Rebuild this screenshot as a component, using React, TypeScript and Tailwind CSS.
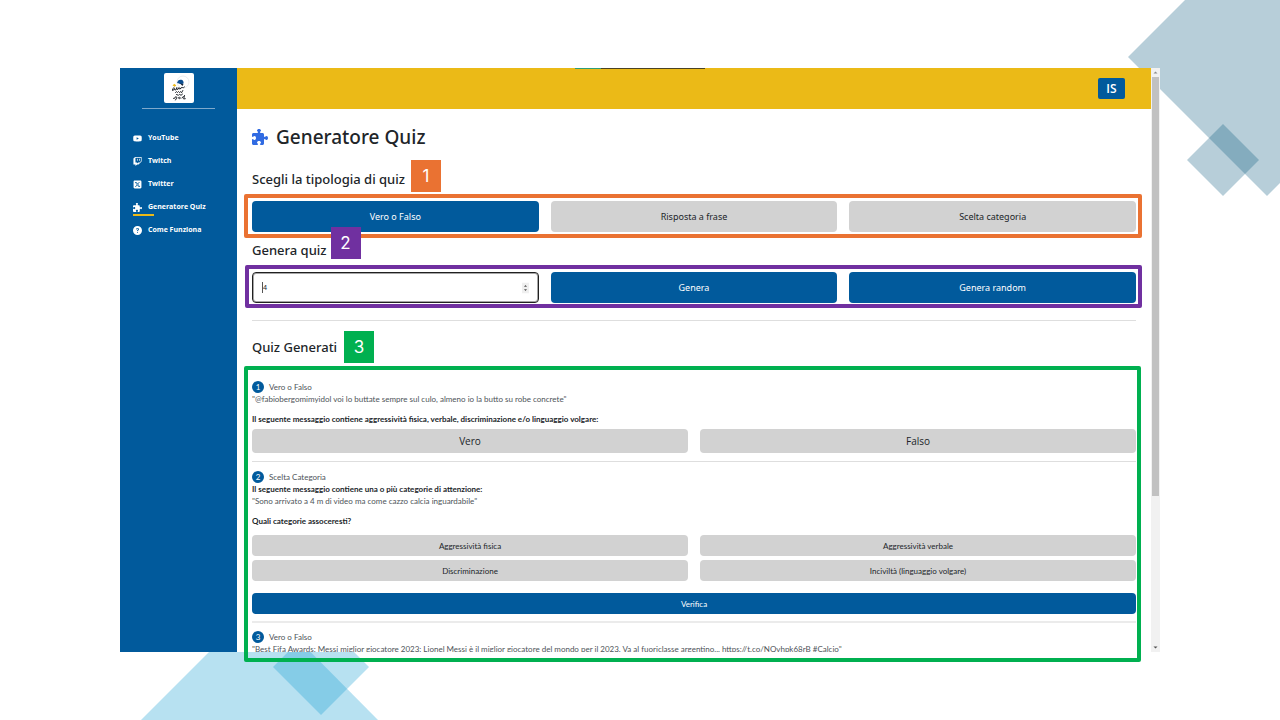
import type { ReactNode } from "react";
import { FaCircleQuestion, FaPuzzlePiece, FaSquareXTwitter, FaTwitch, FaYoutube } from "react-icons/fa6";

const navItems = [
  { label: "YouTube", Icon: FaYoutube, active: false },
  { label: "Twitch", Icon: FaTwitch, active: false },
  { label: "Twitter", Icon: FaSquareXTwitter, active: false },
  { label: "Generatore Quiz", Icon: FaPuzzlePiece, active: true },
  { label: "Come Funziona", Icon: FaCircleQuestion, active: false },
];

function Backdrop() {
  return (
    <>
      <svg className="absolute top-0 right-0 h-[200px] w-[160px]" viewBox="0 0 160 200" fill="#115e80" fillOpacity="0.3" aria-hidden="true">
        <polygon points="8,57 65,0 160,0 160,183 147,196" />
        <polygon points="67,160 103,124 139,160 103,196" />
      </svg>
      <svg className="absolute bottom-0 left-[140px] h-[120px] w-[240px]" viewBox="0 0 240 120" fill="#149ed0" fillOpacity="0.306" aria-hidden="true">
        <polygon points="1,120 120,1 238,120" />
        <polygon points="133,67 181,19 229,67 181,115" />
      </svg>
    </>
  );
}

function Logo() {
  return (
    <svg className="size-[30px]" viewBox="0 0 30 30" role="img" aria-label="Logo">
      <rect width="30" height="30" rx="2" fill="#fff" />
      <circle cx="19" cy="9" r="6" fill="none" stroke="#e3e6ea" strokeWidth="0.8" />
      <path d="M13 10q1-4 4.500-3.200q2.500 1 2 3.600q-3 1-4.500 0z" fill="#0c4f92" />
      <path d="M8.500 12.500l1.800-1.700 2 1.600-1.500 1.300z" fill="#ecb918" />
      <path d="M16 10.500l3.500.5-1 2z" fill="#1b2536" />
      <g fill="none" stroke="#22262c" strokeWidth="1" strokeLinecap="round">
        <path d="M10 14.500q-2 1-1.500 3q1.500 0 2-2q0 2 1.300 1.500l1-2.500q-.3 2.500 1 2l1.200-2q0 2 1.200 1.500q.5-1.500 2-1.500q1 .8 2.300-.5" />
        <path d="M11.500 19.500q1-2 2 0q1-2 2 0q1.200-2 2 .3l1.300-2.300" />
        <path d="M12.500 21.500l2 .8 1-1 1.500 1 1.500-1.200" />
        <path d="M9.500 25.500q1.500.5 1.500-1.300q1-1 2 .3q-1 1.500-1.500 2.500M14.500 25q1-2 2 0q-.5 1.500-2 0M18 25q.5-1.500 1.500-1.500M20.500 22.500l-.8 3.500 1.600-.3" />
      </g>
    </svg>
  );
}

function Button({ children, tone, className }: { children: ReactNode; tone: "blue" | "gray"; className: string }) {
  const color = tone === "blue" ? "bg-[#015a9c] text-white" : "bg-[#d2d2d2] text-[#212529]";
  return (
    <button type="button" className={`w-full rounded ${color} ${className}`}>
      {children}
    </button>
  );
}

function StepHeading({ title, step, marker }: { title: string; step: number; marker: string }) {
  return (
    <h2 className="relative flex h-7 w-fit items-center pt-[2px] text-[13px] font-medium whitespace-nowrap">
      {title}
      <span className={`absolute left-full z-10 flex h-8 w-[30px] items-center justify-center pt-[2px] font-['Inter',sans-serif] text-[17px] font-normal text-white ${marker}`}>
        {step}
      </span>
    </h2>
  );
}

function QuizHeader({ number, kind }: { number: number; kind: string }) {
  return (
    <div className="flex h-[13px] items-center gap-[5px] text-[#4d5358]">
      <span className="flex size-3 items-center justify-center rounded-full bg-[#015a9c] text-white">{number}</span>
      <h3>{kind}</h3>
    </div>
  );
}

function Spinner() {
  return (
    <svg className="absolute top-1/2 right-[10px] h-[11px] w-[7px] -translate-y-1/2" viewBox="0 0 7 11" aria-hidden="true">
      <rect width="7" height="11" fill="#efefef" />
      <path d="M2 4.200h3L3.500 2.500zM2 6.800h3L3.500 8.500z" fill="#505050" />
    </svg>
  );
}

function Scrollbar() {
  return (
    <div className="flex w-[9px] shrink-0 flex-col items-center justify-between bg-[#f1f1f1]" aria-hidden="true">
      <svg className="h-[9px] w-[9px] shrink-0" viewBox="0 0 9 9"><path d="M2.500 5.500h4l-2-2z" fill="#8c8c8c" /></svg>
      <div className="w-[7px] flex-1"><div className="h-[74%] bg-[#c1c1c1]" /></div>
      <svg className="h-[9px] w-[9px] shrink-0" viewBox="0 0 9 9"><path d="M2.500 3.500h4l-2 2z" fill="#505050" /></svg>
    </div>
  );
}

export default function App() {
  return (
    <div className="relative flex h-screen flex-col overflow-hidden bg-white px-[120px] py-[68px] font-['Noto_Sans','Open_Sans',sans-serif] text-[#212529]">
      <Backdrop />
      <div className="relative flex min-h-0 flex-1 bg-white">
        <aside className="flex w-[117px] shrink-0 flex-col bg-[#015a9c] text-white">
          <div className="mx-[22px] flex h-[41px] items-center justify-center border-b border-[#7fa9cc]">
            <Logo />
          </div>
          <nav className="mt-[18px] flex flex-col px-[13px] font-['Open_Sans',sans-serif] text-[7px] font-bold">
            {navItems.map(({ label, Icon, active }) => (
              <a key={label} href="#" className="relative flex h-[23px] items-center gap-[6px]">
                <Icon className="size-[9px]" />
                {label}
                {active && <span className="absolute bottom-[3px] left-0 h-[2px] w-[21px] bg-[#ecb918]" />}
              </a>
            ))}
          </nav>
        </aside>

        <div className="flex min-w-0 flex-1 flex-col">
          <header className="relative flex h-[41px] shrink-0 items-center justify-end bg-[#ebba17] pr-[26px]">
            <div className="absolute top-0 left-[37%] flex h-px w-[130px]">
              <span className="w-[26px] bg-[#2f9e77]" />
              <span className="flex-1 bg-[#4b4324]" />
            </div>
            <button type="button" className="h-[21px] w-[27px] rounded-[2px] bg-[#015a9c] font-['Open_Sans',sans-serif] text-[12px] font-semibold text-white">IS</button>
          </header>

          <main className="flex min-h-0 flex-1 flex-col px-[15px]">
            <h1 className="flex h-14 shrink-0 items-center gap-2 text-[19px] font-medium">
              <FaPuzzlePiece className="size-4 text-[#316be2]" />
              Generatore Quiz
            </h1>

            <StepHeading title="Scegli la tipologia di quiz" step={1} marker="ml-[6px] -top-[5px] bg-[#ea7232]" />
            <div className="relative mt-2 grid grid-cols-3 gap-3 text-[9px]">
              <Button tone="blue" className="h-[31px]">Vero o Falso</Button>
              <Button tone="gray" className="h-[31px]">Risposta a frase</Button>
              <Button tone="gray" className="h-[31px]">Scelta categoria</Button>
              <div className="pointer-events-none absolute -top-[7px] -right-[6px] -bottom-[6px] -left-[8px] rounded-[2px] border-4 border-[#ea7232]" />
            </div>

            <div className="mt-1">
              <StepHeading title="Genera quiz" step={2} marker="ml-[4px] -top-[9px] bg-[#7030a0]" />
            </div>
            <div className="relative mt-2 grid grid-cols-3 gap-3 text-[9px]">
              <div className="relative">
                <input
                  type="number"
                  aria-label="Numero di quiz"
                  defaultValue={4}
                  className="block h-[31px] w-full rounded border border-[#212121] bg-white px-[10px] text-[7px] ring-1 ring-[#212121]/40 ring-inset [appearance:textfield] [&::-webkit-inner-spin-button]:appearance-none"
                />
                <span className="absolute top-[10px] left-[10px] h-[11px] w-px bg-[#555]" />
                <Spinner />
              </div>
              <Button tone="blue" className="h-[31px]">Genera</Button>
              <Button tone="blue" className="h-[31px]">Genera random</Button>
              <div className="pointer-events-none absolute -top-[7px] -right-[6px] -bottom-[5px] -left-[7px] rounded-[2px] border-4 border-[#7030a0]" />
            </div>

            <hr className="mt-[17px] mb-3 shrink-0 border-t border-[#dedede]" />
            <StepHeading title="Quiz Generati" step={3} marker="ml-[7px] -top-[2px] bg-[#00b050]" />

            <section className="relative mt-[6px] min-h-0 flex-1 font-['Lato',sans-serif] text-[8px] leading-3">
              <div className="h-full overflow-hidden pt-[13px]">
                <article>
                  <QuizHeader number={1} kind="Vero o Falso" />
                  <p className="text-[#4d5358]">"@fabiobergomimyidol voi lo buttate sempre sul culo, almeno io la butto su robe concrete"</p>
                  <p className="mt-2 font-bold">Il seguente messaggio contiene aggressività fisica, verbale, discriminazione e/o linguaggio volgare:</p>
                  <div className="mt-1 grid grid-cols-2 gap-3 font-['Open_Sans',sans-serif] text-[10px]">
                    <Button tone="gray" className="h-6">Vero</Button>
                    <Button tone="gray" className="h-6">Falso</Button>
                  </div>
                </article>
                <hr className="my-2 border-t border-[#dedede]" />
                <article>
                  <QuizHeader number={2} kind="Scelta Categoria" />
                  <p className="font-bold">Il seguente messaggio contiene una o più categorie di attenzione:</p>
                  <p className="text-[#4d5358]">"Sono arrivato a 4 m di video ma come cazzo calcia inguardabile"</p>
                  <p className="mt-2 font-bold">Quali categorie assoceresti?</p>
                  <div className="mt-2 grid grid-cols-2 gap-x-3 gap-y-1">
                    <Button tone="gray" className="h-[21px]">Aggressività fisica</Button>
                    <Button tone="gray" className="h-[21px]">Aggressività verbale</Button>
                    <Button tone="gray" className="h-[21px]">Discriminazione</Button>
                    <Button tone="gray" className="h-[21px]">Inciviltà (linguaggio volgare)</Button>
                  </div>
                  <Button tone="blue" className="mt-3 h-[21px]">Verifica</Button>
                </article>
                <hr className="my-[7px] border-t-2 border-[#ebebeb]" />
                <article>
                  <QuizHeader number={3} kind="Vero o Falso" />
                  <p className="text-[#4d5358]">"Best Fifa Awards: Messi miglior giocatore 2023: Lionel Messi è il miglior giocatore del mondo per il 2023. Va al fuoriclasse argentino... https://t.co/NQvhpk68rB #Calcio"</p>
                </article>
              </div>
              <div className="pointer-events-none absolute -top-px -right-[5px] -bottom-[10px] -left-[8px] rounded-[2px] border-4 border-[#00b050]" />
            </section>
          </main>
        </div>
        <Scrollbar />
      </div>
    </div>
  );
}
